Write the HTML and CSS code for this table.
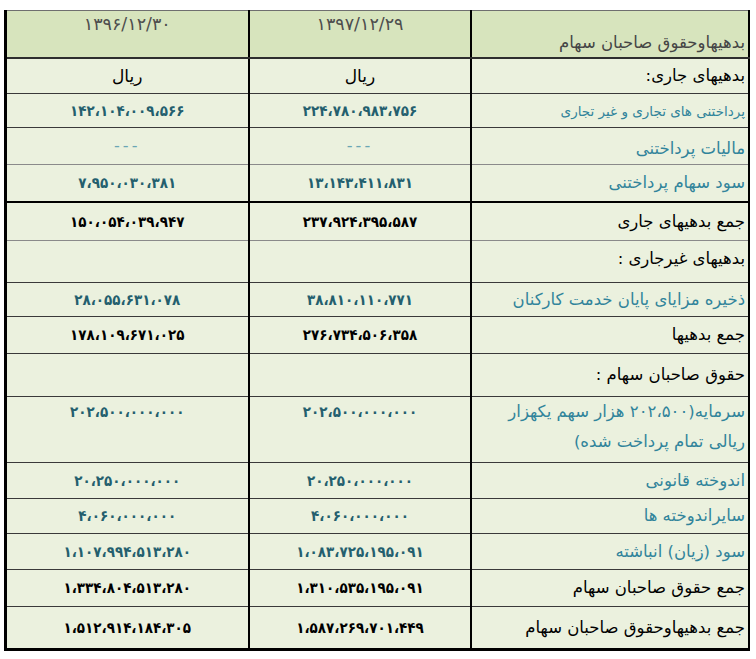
FILE: index.html
```html
<!DOCTYPE html>
<html lang="fa" dir="rtl">
<head>
<meta charset="utf-8">
<title>بدهیها و حقوق صاحبان سهام</title>
<link rel="stylesheet" href="styles.css">
</head>
<body>
<table class="sheet">
  <colgroup>
    <col class="c-label">
    <col class="c-y97">
    <col class="c-y96">
  </colgroup>
  <tr class="head">
    <td class="lbl bottom">بدهیهاوحقوق صاحبان سهام</td>
    <td class="date">۱۳۹۷/۱۲/۲۹</td>
    <td class="date">۱۳۹۶/۱۲/۳۰</td>
  </tr>
  <tr class="r2 b-dark">
    <td class="lbl big">بدهیهای جاری:</td>
    <td class="unit">ریال</td>
    <td class="unit">ریال</td>
  </tr>
  <tr class="r3 b-dark">
    <td class="lbl teal small">پرداختنی های تجاری و غیر تجاری</td>
    <td class="num teal">۲۲۴،۷۸۰،۹۸۳،۷۵۶</td>
    <td class="num teal">۱۴۲،۱۰۴،۰۰۹،۵۶۶</td>
  </tr>
  <tr class="r4 b-gray">
    <td class="lbl teal low">مالیات پرداختنی</td>
    <td class="dash">---</td>
    <td class="dash">---</td>
  </tr>
  <tr class="r5 b-black">
    <td class="lbl teal">سود سهام پرداختنی</td>
    <td class="num teal">۱۳،۱۴۳،۴۱۱،۸۳۱</td>
    <td class="num teal">۷،۹۵۰،۰۳۰،۳۸۱</td>
  </tr>
  <tr class="r6 b-gray">
    <td class="lbl">جمع بدهیهای جاری</td>
    <td class="num">۲۳۷،۹۲۴،۳۹۵،۵۸۷</td>
    <td class="num">۱۵۰،۰۵۴،۰۳۹،۹۴۷</td>
  </tr>
  <tr class="r7 b-dark">
    <td class="lbl high">بدهیهای غیرجاری :</td>
    <td></td>
    <td></td>
  </tr>
  <tr class="r8 b-dark">
    <td class="lbl teal">ذخیره مزایای پایان خدمت کارکنان</td>
    <td class="num teal">۳۸،۸۱۰،۱۱۰،۷۷۱</td>
    <td class="num teal">۲۸،۰۵۵،۶۳۱،۰۷۸</td>
  </tr>
  <tr class="r9 b-dark">
    <td class="lbl">جمع بدهیها</td>
    <td class="num">۲۷۶،۷۳۴،۵۰۶،۳۵۸</td>
    <td class="num">۱۷۸،۱۰۹،۶۷۱،۰۲۵</td>
  </tr>
  <tr class="r10 b-dark">
    <td class="lbl">حقوق صاحبان سهام :</td>
    <td></td>
    <td></td>
  </tr>
  <tr class="r11 b-dark">
    <td class="lbl teal multi">سرمایه(۲۰۲،۵۰۰ هزار سهم یکهزار<br>ریالی تمام پرداخت شده)</td>
    <td class="num teal top">۲۰۲،۵۰۰،۰۰۰،۰۰۰</td>
    <td class="num teal top">۲۰۲،۵۰۰،۰۰۰،۰۰۰</td>
  </tr>
  <tr class="r12 b-dark">
    <td class="lbl teal">اندوخته قانونی</td>
    <td class="num teal">۲۰،۲۵۰،۰۰۰،۰۰۰</td>
    <td class="num teal">۲۰،۲۵۰،۰۰۰،۰۰۰</td>
  </tr>
  <tr class="r13 b-dark">
    <td class="lbl teal">سایراندوخته ها</td>
    <td class="num teal">۴،۰۶۰،۰۰۰،۰۰۰</td>
    <td class="num teal">۴،۰۶۰،۰۰۰،۰۰۰</td>
  </tr>
  <tr class="r14 b-dark">
    <td class="lbl teal">سود (زیان) انباشته</td>
    <td class="num teal">۱،۰۸۳،۷۲۵،۱۹۵،۰۹۱</td>
    <td class="num teal">۱،۱۰۷،۹۹۴،۵۱۳،۲۸۰</td>
  </tr>
  <tr class="r15 b-dark">
    <td class="lbl">جمع حقوق صاحبان سهام</td>
    <td class="num">۱،۳۱۰،۵۳۵،۱۹۵،۰۹۱</td>
    <td class="num">۱،۳۳۴،۸۰۴،۵۱۳،۲۸۰</td>
  </tr>
  <tr class="r16">
    <td class="lbl">جمع بدهیهاوحقوق صاحبان سهام</td>
    <td class="num">۱،۵۸۷،۲۶۹،۷۰۱،۴۴۹</td>
    <td class="num">۱،۵۱۲،۹۱۴،۱۸۴،۳۰۵</td>
  </tr>
</table>
</body>
</html>
```

FILE: styles.css
```css
html, body {
  margin: 0;
  padding: 0;
  background: #ffffff;
}

body {
  padding: 10px 6px 0 6px;
  font-family: "DejaVu Sans", sans-serif;
  color: #000000;
}

.sheet {
  direction: rtl;
  border-collapse: collapse;
  table-layout: fixed;
  width: 744px;
  background: #ebf1de;
  border-top: 1px solid #6f6f6f;
  border-left: 3px solid #000000;
  border-right: 2px solid #000000;
  border-bottom: 3px solid #000000;
}

.c-label { width: 278px; }
.c-y97 { width: 222px; }
.c-y96 { width: 244px; }

.sheet td {
  border-left: 2px solid #000000;
  padding: 0 4px;
  vertical-align: middle;
  text-align: center;
  white-space: nowrap;
  overflow: hidden;
  line-height: 20px;
}

.sheet td:last-child { border-left: none; }

.b-dark td { border-bottom: 1px solid #3a3a3a; }
.b-gray td { border-bottom: 1px solid #8a8a8a; }
.b-black td { border-bottom: 2px solid #000000; }

.head td {
  background: #d7e4bd;
  border-bottom: 2px solid #2e2e2e;
  height: 42px;
  color: #454545;
}

.r2 td { height: 34px; }
.r3 td { height: 33px; }
.r4 td { height: 30px; }
.r5 td { height: 36px; }
.r6 td { height: 37px; }
.r7 td { height: 35px; }
.r8 td { height: 33px; }
.r9 td { height: 36px; }
.r10 td { height: 42px; }
.r11 td { height: 60px; }
.r12 td { height: 35px; }
.r13 td { height: 34px; }
.r14 td { height: 35px; }
.r15 td { height: 36px; }
.r16 td { height: 41px; }

.sheet td.lbl {
  text-align: right;
  font-size: 16.5px;
  padding-right: 3px;
}

.sheet td.lbl.big { font-size: 16.5px; }
.sheet td.lbl.small { font-size: 13.5px; }
.sheet td.lbl.low { padding-top: 6px; }
.sheet td.lbl.high { padding-bottom: 6px; }

.sheet td.lbl.multi {
  line-height: 30px;
  vertical-align: top;
  padding-top: 0;
}

.sheet .head td.lbl {
  font-size: 16.5px;
  vertical-align: bottom;
  padding-bottom: 4px;
}

.sheet td.date {
  vertical-align: top;
  padding-top: 3px;
  font-size: 17.5px;
  color: #4d4d4d;
}

.sheet td.top { vertical-align: top; padding-top: 5px; }

.num {
  font-family: "DejaVu Sans Condensed", "DejaVu Sans", sans-serif;
  font-weight: bold;
  font-size: 15px;
}

.unit {
  font-size: 17px;
}

.dash {
  color: #6aa6b4;
  font-size: 16px;
  letter-spacing: 3px;
}

.teal { color: #31849b; }
.num.teal { color: #245f6e; }
```
